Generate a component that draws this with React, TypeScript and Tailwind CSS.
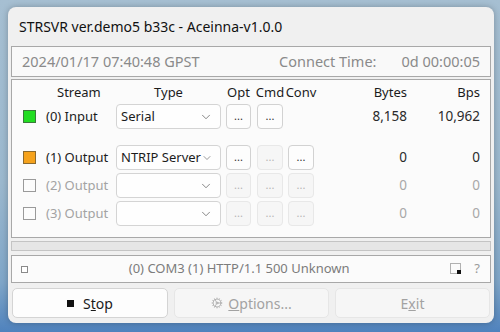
import { ChevronDown, Cog } from "lucide-react";

interface Row {
  label: string;
  type: string;
  color: string | null;
  enabled: boolean;
  cmd: boolean;
  conv: boolean | null;
  bytes: string;
  bps: string;
}

// conv: null means the row has no Conv button at all
const rows: Row[] = [
  { label: "(0) Input", type: "Serial", color: "bg-[#22dd22] border-[#3a7a3a]", enabled: true, cmd: true, conv: null, bytes: "8,158", bps: "10,962" },
  { label: "(1) Output", type: "NTRIP Server", color: "bg-[#f5a21c] border-[#8a6a30]", enabled: true, cmd: false, conv: true, bytes: "0", bps: "0" },
  { label: "(2) Output", type: "", color: null, enabled: false, cmd: false, conv: false, bytes: "0", bps: "0" },
  { label: "(3) Output", type: "", color: null, enabled: false, cmd: false, conv: false, bytes: "0", bps: "0" },
];

function DotButton({ on, w = "w-[26px]" }: { on: boolean; w?: string }) {
  return (
    <div
      className={`${w} h-[25px] shrink-0 rounded-[4px] border flex items-center justify-center text-[11px] leading-none pb-[2px] ${
        on ? "bg-[#fdfdfd] border-[#d2d2d2] text-[#333]" : "bg-[#f6f6f6] border-[#e8e8e8] text-[#b5b5b5]"
      }`}
    >
      ...
    </div>
  );
}

function StreamRow({ row }: { row: Row }) {
  const text = row.enabled ? "text-[#1c1c1c]" : "text-[#a3a3a3]";
  const num = row.enabled ? "text-[#2a2a2a]" : "text-[#a8a8a8]";
  return (
    <div className="flex items-center h-[25px]">
      <div className="w-[11px] shrink-0" />
      <div className={`w-[13px] h-[13px] shrink-0 border ${row.color ?? "bg-[#fcfcfc] border-[#9a9a9a]"}`} />
      <div className={`w-[70px] ml-[10px] shrink-0 text-[13px] whitespace-nowrap ${text}`}>{row.label}</div>
      <div className="w-[105px] h-[25px] shrink-0 rounded-[4px] border border-[#d4d4d4] bg-[#fefefe] flex items-center pl-[4px] pr-[7px]">
        <span className="flex-1 text-[13px] text-[#1c1c1c] whitespace-nowrap">{row.type}</span>
        <ChevronDown size={14} strokeWidth={1.2} className="text-[#555]" />
      </div>
      <div className="ml-[5px]">
        <DotButton on={row.enabled} w="w-[25px]" />
      </div>
      <div className="ml-[6px]">
        <DotButton on={row.cmd} />
      </div>
      <div className="ml-[5px] w-[26px] shrink-0">
        {row.conv !== null && <DotButton on={row.conv} />}
      </div>
      <div className={`w-[93px] shrink-0 text-right text-[13.5px] ${num}`}>{row.bytes}</div>
      <div className={`w-[73px] shrink-0 text-right text-[13.5px] ${num}`}>{row.bps}</div>
    </div>
  );
}

export default function App() {
  return (
    <div className="w-[500px] h-[332px] overflow-hidden bg-[linear-gradient(180deg,#a6bfd2_0%,#9bb8ce_55%,#7fa6c8_85%,#4f82bd_100%)] pt-[7px] pl-[8px] font-['Noto_Sans',sans-serif]">
      <div className="w-[486px] h-[316px] rounded-[8px] bg-[#f0f0f0] shadow-[0_0_6px_rgba(0,0,0,0.25)] flex flex-col px-[3px]">
        {/* title */}
        <div className="h-[39px] shrink-0 flex items-center pl-[8px] pb-[1px] text-[14px] text-[#111]">
          STRSVR ver.demo5 b33c - Aceinna-v1.0.0
        </div>

        {/* time */}
        <div className="h-[31px] shrink-0 border border-[#a8a8a8] bg-[#f9f9f9] flex items-center pl-[10px] pr-[10px] text-[14.5px] text-[#8a8a8a]">
          <span>2024/01/17 07:40:48 GPST</span>
          <span className="ml-auto">Connect Time:</span>
          <span className="ml-[25px]">0d 00:00:05</span>
        </div>

        {/* streams */}
        <div className="mt-[2px] h-[159px] shrink-0 border border-[#a8a8a8] bg-[#fbfbfb] flex flex-col">
          <div className="flex items-center h-[18px] mt-[4px] text-[13px] text-[#1c1c1c]">
            <div className="w-[104px] shrink-0 pl-[45px]">Stream</div>
            <div className="w-[105px] shrink-0 flex justify-center">Type</div>
            <div className="w-[25px] ml-[5px] shrink-0 flex justify-center whitespace-nowrap">Opt</div>
            <div className="w-[26px] ml-[6px] shrink-0 flex justify-center whitespace-nowrap">Cmd</div>
            <div className="w-[26px] ml-[5px] shrink-0 flex justify-center whitespace-nowrap">Conv</div>
            <div className="w-[93px] shrink-0 text-right">Bytes</div>
            <div className="w-[73px] shrink-0 text-right">Bps</div>
          </div>
          <div className="mt-[2px]">
            <StreamRow row={rows[0]} />
          </div>
          <div className="mt-[16px] flex flex-col gap-[3px]">
            <StreamRow row={rows[1]} />
            <StreamRow row={rows[2]} />
            <StreamRow row={rows[3]} />
          </div>
        </div>

        {/* progress */}
        <div className="mt-[3px] h-[10px] shrink-0 border border-[#c4c4c4] bg-[#e6e6e6]" />

        {/* status */}
        <div className="mt-[4px] h-[28px] shrink-0 border border-[#a8a8a8] bg-[#fbfbfb] flex items-center pl-[9px] pr-[10px]">
          <div className="w-[7px] h-[7px] border border-[#8a8a8a] bg-white" />
          <div className="flex-1 text-center text-[13px] text-[#7c7c7c] whitespace-nowrap">
            (0) COM3 (1) HTTP/1.1 500 Unknown
          </div>
          <svg width="12" height="12" viewBox="0 0 12 12" className="mr-[12px]">
            <rect x="0.5" y="0.5" width="10" height="10" fill="none" stroke="#666" strokeWidth="1" strokeDasharray="1 1" />
            <rect x="7" y="7" width="4" height="4" fill="#111" />
          </svg>
          <span className="text-[13px] text-[#9a9a9a]">?</span>
        </div>

        {/* buttons */}
        <div className="mt-[5px] flex gap-[6px] px-[1px]">
          <div className="w-[156px] h-[30px] rounded-[5px] border border-[#d4d4d4] bg-[#fdfdfd] flex items-center justify-center gap-[9px] text-[14px] text-[#1a1a1a]">
            <div className="w-[7px] h-[7px] bg-[#111]" />
            <span>
              S<span className="underline">t</span>op
            </span>
          </div>
          <div className="w-[155px] h-[30px] rounded-[5px] border border-[#e6e6e6] bg-[#f6f6f6] flex items-center justify-center gap-[5px] text-[14px] text-[#a2a2a2]">
            <Cog size={12} strokeWidth={1.4} />
            <span>
              <span className="underline">O</span>ptions...
            </span>
          </div>
          <div className="w-[155px] h-[30px] rounded-[5px] border border-[#e6e6e6] bg-[#f6f6f6] flex items-center justify-center text-[14px] text-[#a2a2a2]">
            <span>
              E<span className="underline">x</span>it
            </span>
          </div>
        </div>
      </div>
    </div>
  );
}
